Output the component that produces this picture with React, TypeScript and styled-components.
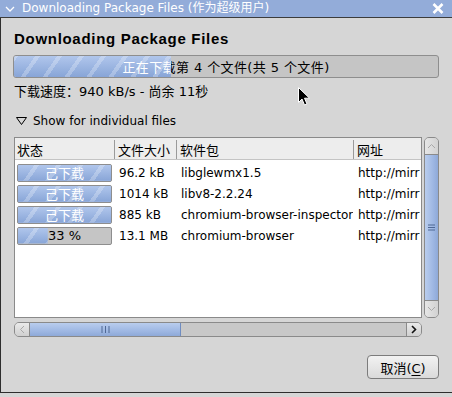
import React from 'react';
import styled, { createGlobalStyle } from 'styled-components';

const uiFont = `"DejaVu Sans", "Noto Sans CJK SC", sans-serif`;

const GlobalStyle = createGlobalStyle`
  html, body {
    margin: 0;
    padding: 0;
    background: #d6d6d6;
  }
  body {
    font-family: ${uiFont};
    font-size: 12px;
    color: #000;
  }
`;

type FileRow = {
  done: boolean;
  percent: number;
  size: string;
  pkg: string;
  url: string;
};

const files: FileRow[] = [
  { done: true, percent: 100, size: '96.2 kB', pkg: 'libglewmx1.5', url: 'http://mirr' },
  { done: true, percent: 100, size: '1014 kB', pkg: 'libv8-2.2.24', url: 'http://mirr' },
  { done: true, percent: 100, size: '885 kB', pkg: 'chromium-browser-inspector', url: 'http://mirr' },
  { done: false, percent: 32, size: '13.1 MB', pkg: 'chromium-browser', url: 'http://mirr' },
];

export default function App() {
  return (
    <>
      <GlobalStyle />
      <Window>
        <TitleBar>
          <TitleChevron viewBox="0 0 10 7">
            <polyline points="1,1 5,5 9,1" />
          </TitleChevron>
          <TitleText>Downloading Package Files (作为超级用户)</TitleText>
          <CloseIcon viewBox="0 0 12 11">
            <path d="M1.5 1 L10.5 10 M10.5 1 L1.5 10" />
          </CloseIcon>
        </TitleBar>
        <Frame>
          <Heading>Downloading Package Files</Heading>
          <Progress $height={23} $percent={37} $rounded={3}>
            <BarLabel $wide>正在下载第 4 个文件(共 5 个文件)</BarLabel>
            <BarFill $percent={37}>
              <BarLabel $wide $light>正在下载第 4 个文件(共 5 个文件)</BarLabel>
            </BarFill>
          </Progress>
          <SpeedLine>下载速度：940 kB/s - 尚余 11秒</SpeedLine>
          <Expander>
            <ExpanderArrow viewBox="0 0 11 8">
              <polygon points="0.5,0.5 10.5,0.5 5.5,7.5" />
            </ExpanderArrow>
            Show for individual files
          </Expander>
          <ListArea>
            <ListBox>
              <HeaderRow>
                <HeaderCell $first>状态</HeaderCell>
                <HeaderCell>文件大小</HeaderCell>
                <HeaderCell>软件包</HeaderCell>
                <HeaderCell>网址</HeaderCell>
              </HeaderRow>
              {files.map((f) => (
                <DataRow key={f.pkg}>
                  <StatusCell>
                    <Progress $height={18} $percent={f.percent} $rounded={2}>
                      <BarLabel>{f.done ? '己下载' : '33 %'}</BarLabel>
                      <BarFill $percent={f.percent}>
                        <BarLabel $light>{f.done ? '己下载' : '33 %'}</BarLabel>
                      </BarFill>
                    </Progress>
                  </StatusCell>
                  <DataCell>{f.size}</DataCell>
                  <DataCell>{f.pkg}</DataCell>
                  <DataCell>{f.url}</DataCell>
                </DataRow>
              ))}
            </ListBox>
            <VScroll>
              <VButton>
                <ArrowIcon viewBox="0 0 9 6" $faded>
                  <polyline points="1,5 4.5,1.5 8,5" />
                </ArrowIcon>
              </VButton>
              <VThumb>
                <GripIcon viewBox="0 0 7 7">
                  <path d="M0 1 H7 M0 3.5 H7 M0 6 H7" />
                </GripIcon>
              </VThumb>
              <VButton $bottom>
                <ArrowIcon viewBox="0 0 9 6" $faded>
                  <polyline points="1,1 4.5,4.5 8,1" />
                </ArrowIcon>
              </VButton>
            </VScroll>
            <HScroll>
              <HButton>
                <ArrowIcon viewBox="0 0 6 9" $faded>
                  <polyline points="5,1 1.5,4.5 5,8" />
                </ArrowIcon>
              </HButton>
              <HThumb>
                <GripIcon viewBox="0 0 9 7">
                  <path d="M1 0 V7 M4.5 0 V7 M8 0 V7" />
                </GripIcon>
              </HThumb>
              <HTrack />
              <HButton $right>
                <ArrowIcon viewBox="0 0 6 9">
                  <polyline points="1,1 4.5,4.5 1,8" />
                </ArrowIcon>
              </HButton>
            </HScroll>
          </ListArea>
          <ButtonRow>
            <CancelButton>
              取消(<u>C</u>)
            </CancelButton>
          </ButtonRow>
        </Frame>
        <Cursor viewBox="0 0 12 19">
          <path d="M0.5 0.5 L0.5 15.5 L4 12 L6.5 18 L9 17 L6.5 11.2 L11.5 11.2 Z" />
        </Cursor>
      </Window>
    </>
  );
}

const Window = styled.div`
  position: relative;
  width: 452px;
  height: 393px;
  display: flex;
  flex-direction: column;
  background: #d6d6d6;
`;

const TitleBar = styled.div`
  height: 17px;
  display: flex;
  align-items: center;
  background: #93acd9;
  border-bottom: 1px solid #3c3c3c;
  color: #fff;
`;

const TitleChevron = styled.svg`
  width: 10px;
  height: 7px;
  margin: 1px 0 0 5px;
  fill: none;
  stroke: #fff;
  stroke-width: 1.3;
`;

const TitleText = styled.span`
  flex: 1;
  margin-left: 7px;
  font-size: 12px;
  line-height: 17px;
  white-space: nowrap;
`;

const CloseIcon = styled.svg`
  width: 12px;
  height: 11px;
  margin-right: 8px;
  fill: none;
  stroke: #fff;
  stroke-width: 2.6;
`;

const Frame = styled.div`
  flex: 1;
  display: flex;
  flex-direction: column;
  padding: 11px 13px 0 12px;
  border-left: 1px solid #2e2e2e;
  border-bottom: 1px solid #2e2e2e;
`;

const Heading = styled.h1`
  margin: 0;
  font-family: "Liberation Sans", "Noto Sans CJK SC", sans-serif;
  font-size: 15px;
  font-weight: bold;
  letter-spacing: 0.7px;
  line-height: 20px;
  padding-left: 1px;
`;

const Progress = styled.div<{ $height: number; $percent: number; $rounded: number }>`
  position: relative;
  height: ${(p) => p.$height}px;
  box-sizing: border-box;
  margin-top: 6px;
  border: 1px solid #8e8e8e;
  border-radius: ${(p) => p.$rounded}px;
  background: ${(p) => (p.$percent >= 100 ? '#9fb7e2' : '#c5c5c5')};
  overflow: hidden;
`;

const BarFill = styled.div<{ $percent: number }>`
  position: absolute;
  inset: 0;
  clip-path: inset(0 ${(p) => 100 - p.$percent}% 0 0);
  background:
    repeating-linear-gradient(
      -55deg,
      rgba(255, 255, 255, 0) 0px,
      rgba(255, 255, 255, 0) 14px,
      rgba(255, 255, 255, 0.25) 14px,
      rgba(255, 255, 255, 0.25) 18px
    ),
    linear-gradient(#b0c6ec, #88a5d7);
`;

const BarLabel = styled.div<{ $light?: boolean; $wide?: boolean }>`
  position: absolute;
  inset: 0;
  display: flex;
  align-items: center;
  justify-content: center;
  font-size: 13px;
  letter-spacing: ${(p) => (p.$wide ? '0.4px' : '0')};
  white-space: nowrap;
  color: ${(p) => (p.$light ? '#fff' : '#000')};
`;

const SpeedLine = styled.div`
  margin-top: 6px;
  padding-left: 1px;
  font-size: 13px;
  line-height: 16px;
`;

const Expander = styled.div`
  margin-top: 13px;
  display: flex;
  align-items: center;
  gap: 6px;
  padding-left: 3px;
  font-size: 12px;
  line-height: 16px;
`;

const ExpanderArrow = styled.svg`
  width: 11px;
  height: 8px;
  fill: none;
  stroke: #000;
  stroke-width: 1;
`;

const ListArea = styled.div`
  margin-top: 8px;
  margin-left: 1px;
  display: grid;
  grid-template-columns: 408px 15px;
  grid-template-rows: 181px 15px;
  column-gap: 2px;
  row-gap: 4px;
`;

const ListBox = styled.div`
  box-sizing: border-box;
  background: #fff;
  border: 1px solid #8a8a8a;
  overflow: hidden;
`;

const columns = '99px 62px 177px 1fr';

const HeaderRow = styled.div`
  display: grid;
  grid-template-columns: ${columns};
  height: 21px;
  background: #ededed;
  border-bottom: 1px solid #c4c4c4;
  margin-bottom: 2px;
`;

const HeaderCell = styled.div<{ $first?: boolean }>`
  display: flex;
  align-items: center;
  padding-left: ${(p) => (p.$first ? '2px' : '3px')};
  margin: 2px 0;
  border-left: ${(p) => (p.$first ? 'none' : '1px solid #9a9a9a')};
  font-size: 13px;
  white-space: nowrap;
`;

const DataRow = styled.div`
  display: grid;
  grid-template-columns: ${columns};
  height: 21px;
  align-items: center;
`;

const StatusCell = styled.div`
  padding: 0 2px;
  & > div {
    margin-top: 0;
  }
`;

const DataCell = styled.div`
  padding-left: 5px;
  font-size: 12px;
  white-space: nowrap;
  overflow: hidden;
`;

const VScroll = styled.div`
  grid-row: 1;
  grid-column: 2;
  display: flex;
  flex-direction: column;
  box-sizing: border-box;
  border: 1px solid #8a8a8a;
  border-radius: 5px;
  overflow: hidden;
  background: #c8c8c8;
`;

const VButton = styled.div<{ $bottom?: boolean }>`
  height: 16px;
  display: flex;
  align-items: center;
  justify-content: center;
  background: linear-gradient(90deg, #e6e6e6, #d2d2d2);
  ${(p) => (p.$bottom ? 'border-top: 1px solid #8a8a8a;' : 'border-bottom: 1px solid #8a8a8a;')}
`;

const VThumb = styled.div`
  flex: 1;
  display: flex;
  align-items: center;
  justify-content: center;
  background: linear-gradient(90deg, #b9cdee, #9fb8e3 60%, #8ea9d8);
`;

const ArrowIcon = styled.svg<{ $faded?: boolean }>`
  width: ${(p) => (p.viewBox === '0 0 9 6' ? '9px' : '6px')};
  height: ${(p) => (p.viewBox === '0 0 9 6' ? '6px' : '9px')};
  fill: none;
  stroke: ${(p) => (p.$faded ? '#a8a8a8' : '#111')};
  stroke-width: ${(p) => (p.$faded ? 1 : 1.6)};
`;

const GripIcon = styled.svg`
  width: ${(p) => (p.viewBox === '0 0 7 7' ? '7px' : '9px')};
  height: 7px;
  fill: none;
  stroke: #4f6894;
  stroke-width: 1;
`;

const HScroll = styled.div`
  grid-row: 2;
  grid-column: 1;
  display: flex;
  box-sizing: border-box;
  border: 1px solid #8a8a8a;
  border-radius: 5px;
  overflow: hidden;
  background: #c8c8c8;
`;

const HButton = styled.div<{ $right?: boolean }>`
  width: 14px;
  display: flex;
  align-items: center;
  justify-content: center;
  background: linear-gradient(#eaeaea, #d0d0d0);
  ${(p) => (p.$right ? 'border-left: 1px solid #8a8a8a;' : 'border-right: 1px solid #8a8a8a;')}
`;

const HThumb = styled.div`
  width: 150px;
  display: flex;
  align-items: center;
  justify-content: center;
  background: linear-gradient(#b9cdee, #9fb8e3 60%, #8ea9d8);
  border-right: 1px solid #6f8cc0;
`;

const HTrack = styled.div`
  flex: 1;
`;

const ButtonRow = styled.div`
  margin-top: 18px;
  display: flex;
  justify-content: flex-end;
`;

const CancelButton = styled.button`
  width: 72px;
  height: 24px;
  padding: 0;
  font-family: ${uiFont};
  font-size: 13px;
  color: #000;
  background: linear-gradient(#f2f2f2, #dadada);
  border: 1px solid #7c7c7c;
  border-radius: 4px;

  u {
    text-underline-offset: 2px;
  }
`;

const Cursor = styled.svg`
  position: absolute;
  left: 298px;
  top: 87px;
  width: 12px;
  height: 19px;
  fill: #000;
  stroke: #fff;
  stroke-width: 1;
`;
